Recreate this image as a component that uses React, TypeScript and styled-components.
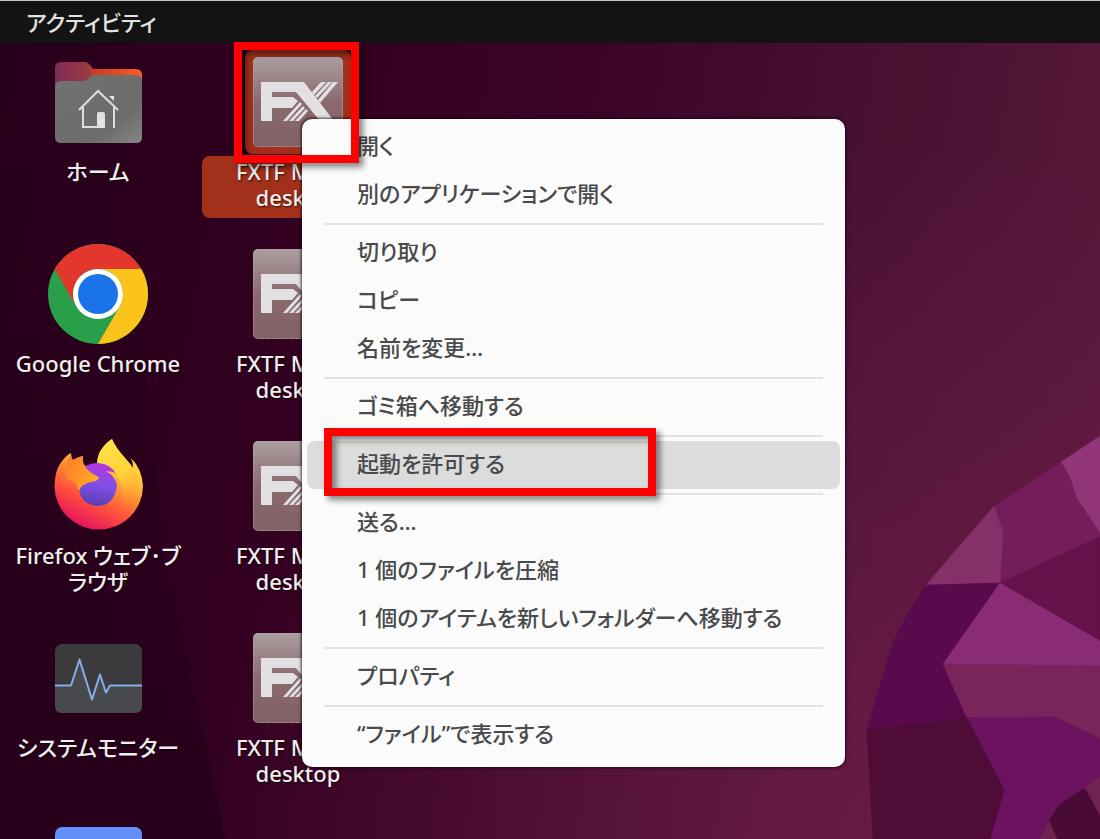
import React from "react";
import styled, { createGlobalStyle } from "styled-components";

const GlobalStyle = createGlobalStyle`
  * { box-sizing: border-box; }
  body {
    margin: 0;
    background: #2b001e;
    font-family: "Noto Sans", "Noto Sans CJK JP", sans-serif;
    font-weight: 500;
    font-feature-settings: "palt";
  }
  button { font: inherit; font-feature-settings: inherit; color: inherit; border: 0; background: none; padding: 0; }
`;

const Screen = styled.div`
  position: relative;
  display: flex;
  flex-direction: column;
  height: 100vh;
  overflow: hidden;
`;

const TopBar = styled.header`
  flex: none;
  display: flex;
  align-items: center;
  height: 43px;
  padding: 0 26px;
  background: #131313;
  border-top: 1px solid #c4c8c8;
`;

const Activities = styled.button`
  color: #e2e2e2;
  font-size: 22px;
  line-height: 26px;
`;

const Desktop = styled.main`
  flex: 1;
  min-height: 0;
  position: relative;
  display: flex;
  gap: 8px;
  padding: 9px 2px 0;
  background:
    radial-gradient(circle at 82% 100%, rgba(112, 30, 76, 0.75), rgba(112, 30, 76, 0) 58%),
    linear-gradient(100deg, #29001b 0%, #30001f 22%, #3b0427 48%, #481030 70%, #5b1a3c 100%);
`;

const Wallpaper = styled.svg`
  position: absolute;
  inset: 0;
  width: 100%;
  height: 100%;
`;

const Column = styled.div`
  position: relative;
  flex: none;
  display: grid;
  grid-template-columns: 192px;
  grid-auto-rows: 184px;
  align-content: start;
  gap: 8px;
`;

const Launcher = styled.button`
  display: flex;
  flex-direction: column;
  align-items: center;
  gap: 4px;
`;

const IconBox = styled.span<{ $selected?: boolean }>`
  display: block;
  width: 106px;
  height: 104px;
  margin: -2px 0;
  padding: 2px 3px;
  border-radius: 8px;
  background: ${(p) => (p.$selected ? "#a2301b" : "transparent")};
  svg { display: block; }
`;

const LauncherLabel = styled.span<{ $selected?: boolean }>`
  align-self: stretch;
  padding: 2px 8px 8px;
  border-radius: 8px;
  background: ${(p) => (p.$selected ? "#a2301b" : "transparent")};
  color: #f0eeee;
  font-size: 22px;
  line-height: 26px;
  white-space: pre-line;
  text-shadow: 1px 1px 2px rgba(0, 0, 0, 0.7);
`;

const Menu = styled.div`
  position: absolute;
  left: 302px;
  top: 119px;
  width: 543px;
  padding: 4px 5px 8px;
  border-radius: 10px;
  background: #fafbfa;
  box-shadow: 0 0 3px 1px rgba(20, 0, 14, 0.75);
`;

const MenuItem = styled.button<{ $active?: boolean }>`
  display: block;
  width: 100%;
  height: 48px;
  padding: 0 50px 4px;
  border-radius: 8px;
  text-align: left;
  white-space: nowrap;
  font-size: 22px;
  line-height: 44px;
  color: #4a4a4c;
  background: ${(p) => (p.$active ? "#dcdcdc" : "transparent")};
`;

const Separator = styled.hr`
  height: 2px;
  margin: 4px 17px;
  border: 0;
  background: #e2e2e2;
`;

const Marker = styled.div<{ $x: number; $y: number; $w: number; $h: number }>`
  position: absolute;
  left: ${(p) => p.$x}px;
  top: ${(p) => p.$y}px;
  width: ${(p) => p.$w}px;
  height: ${(p) => p.$h}px;
  border: 8px solid #fe0000;
  filter: drop-shadow(4px 4px 3px rgba(0, 0, 0, 0.5));
  pointer-events: none;
`;

const facets: [string, string][] = [
  ["#903578", "1100,436 1061,462 1070,478 1077,499 1100,533"],
  ["#751d5a", "1061,462 994,506 1003,532 1000,583 1100,537 1100,533 1077,499 1070,478"],
  ["#86306a", "994,506 1003,532 1000,583 926,585"],
  ["#63124a", "1000,583 1100,537 1100,641"],
  ["#590a4c", "926,585 1000,583 943,664 967,718 867,730 880,684 894,640 910,610"],
  ["#892c75", "1000,583 1100,641 1100,666 943,664"],
  ["#7a245c", "943,664 1100,666 1100,739 1055,717 967,718"],
  ["#6d125f", "967,718 1055,717 1100,739 1100,776 1059,805 1040,839 990,839 1004,790"],
  ["#4e0c36", "867,730 967,718 1004,790 990,839 873,839"],
  ["#4a0a36", "1059,805 1085,788 1100,815 1100,839 1057,839 1049,821"],
  ["#702350", "1085,788 1100,776 1100,815"],
  ["#702350", "1049,821 1057,839 1040,839"],
];

const HomeIcon = () => (
  <svg width="100" height="100" viewBox="0 0 100 100" aria-hidden="true">
    <defs>
      <linearGradient id="tab" x1="0" x2="1" y1="0" y2="0">
        <stop offset="0" stopColor="#7f2a57" />
        <stop offset="0.4" stopColor="#9c3a40" />
        <stop offset="0.42" stopColor="#c23c2b" />
        <stop offset="1" stopColor="#ff5a28" />
      </linearGradient>
      <linearGradient id="folder" x1="0" x2="1" y1="0" y2="1">
        <stop offset="0" stopColor="#707270" />
        <stop offset="0.7" stopColor="#6c6d6b" />
        <stop offset="1" stopColor="#858785" />
      </linearGradient>
    </defs>
    <path d="M7 16q0-6 6-6h24q3 0 5 3l3 4h43q6 0 6 6v20H7z" fill="url(#tab)" />
    <path d="M7 35q0-6 6-6h22q3 0 5-2l2-2q2-2 5-2h41q6 0 6 6v56q0 6-6 6H13q-6 0-6-6z" fill="url(#folder)" />
    <g fill="none" stroke="#dcdcdc" strokeWidth="2">
      <path d="M31 58l19-19 20 19" />
      <path d="M35 55v20h21M66 55v21" />
    </g>
    <path d="M49 62q0-2 2-2h4q2 0 2 2v14h-8zM61 44h5v5z" fill="#e2e2e2" />
  </svg>
);

const ChromeIcon = () => (
  <svg width="100" height="100" viewBox="0 0 100 100" aria-hidden="true">
    <circle cx="50" cy="50" r="50" fill="#2a9f49" />
    <path d="M50 25H93.3A50 50 0 0 1 50 100L71.7 62.5A25 25 0 0 0 50 25z" fill="#fcc31a" />
    <path d="M6.7 25A50 50 0 0 1 93.3 25H50A25 25 0 0 0 28.3 62.5z" fill="#e3372d" />
    <circle cx="50" cy="50" r="25" fill="#fff" />
    <circle cx="50" cy="50" r="20" fill="#1a73e8" />
  </svg>
);

const FirefoxIcon = () => (
  <svg width="100" height="100" viewBox="0 0 100 100" aria-hidden="true">
    <defs>
      <linearGradient id="body" x1="0.8" y1="0.1" x2="0.35" y2="1">
        <stop offset="0.05" stopColor="#ffe03e" />
        <stop offset="0.3" stopColor="#ffbd38" />
        <stop offset="0.5" stopColor="#ff8430" />
        <stop offset="0.72" stopColor="#ff4a3f" />
        <stop offset="1" stopColor="#e31261" />
      </linearGradient>
      <linearGradient id="globe" x1="0.6" y1="0" x2="0.4" y2="1">
        <stop offset="0" stopColor="#b833e1" />
        <stop offset="0.5" stopColor="#7f4fe8" />
        <stop offset="1" stopColor="#5a3fb0" />
      </linearGradient>
      <linearGradient id="head" x1="0" y1="0.2" x2="1" y2="0.7">
        <stop offset="0" stopColor="#ff7b2e" />
        <stop offset="1" stopColor="#ffb01e" />
      </linearGradient>
      <linearGradient id="flame" x1="0" y1="0" x2="0.5" y2="1">
        <stop offset="0" stopColor="#ffe34a" />
        <stop offset="0.6" stopColor="#ffd53a" />
        <stop offset="1" stopColor="#ffa436" stopOpacity="0" />
      </linearGradient>
    </defs>
    <path d="M23 17Q23 22 25 24Q30 21 35 20Q34 26 37 30L49 29Q49 13 64 3Q67 11 77 22Q82 28 85 32Q85 26 83 22Q94 33 95 50A44 44 0 0 1 50.500 93.500A44 44 0 0 1 6.500 50Q7 35 12 28Q17 20 23 17z" fill="url(#body)" />
    <path d="M49 29Q49 13 64 3Q67 11 77 22Q93 38 90 56Q84 72 74 76Q80 46 62 32Q56 28 49 29z" fill="url(#flame)" />
    <path d="M36 31Q42 27 50 27Q63 28 68 38Q70 46 68 55Q63 70 50 70Q33 69 31 53L33 44z" fill="url(#globe)" />
    <path d="M58 35.500Q64 34.500 69 38L69 48Q66 39 58 35.500z" fill="#ffb93a" />
    <path d="M23 18Q23 22 25 24Q30 21 35 20Q33 25 36 29Q41 37 51 41Q51 45 43 46Q33 48 31 55Q28 44 19 43Q14 35 23 18z" fill="url(#head)" />
  </svg>
);

const MonitorIcon = () => (
  <svg width="100" height="100" viewBox="0 0 100 100" aria-hidden="true">
    <rect x="7" y="16" width="87" height="69" rx="7" fill="#3b3b3d" />
    <path d="M7 57h16l8-25 13 40 7-24 7 17 3-8h33v21q0 7-7 7H14q-7 0-7-7z" fill="#48494c" />
    <path d="M7 57.500h16l8.500-26 12.500 40 8-25 6 18 4-7h32" fill="none" stroke="#86aeea" strokeWidth="2" strokeLinejoin="round" />
  </svg>
);

const BlueIcon = () => (
  <svg width="100" height="100" viewBox="0 0 100 100" aria-hidden="true">
    <rect x="7" y="7" width="87" height="87" rx="7" fill="#638ff8" />
  </svg>
);

const FxIcon = ({ id }: { id: string }) => (
  <svg width="100" height="100" viewBox="0 0 100 100" aria-hidden="true">
    <defs>
      <linearGradient id={`${id}-bg`} x1="0" y1="0" x2="0" y2="1">
        <stop offset="0" stopColor="#a89a9c" />
        <stop offset="0.5" stopColor="#805e62" />
        <stop offset="1" stopColor="#765459" />
      </linearGradient>
      <pattern id={`${id}-dots`} width="2" height="2" patternUnits="userSpaceOnUse">
        <rect width="1" height="1" fill="#c8bcbc" fillOpacity="0.25" />
        <rect x="1" y="1" width="1" height="1" fill="#c8bcbc" fillOpacity="0.25" />
      </pattern>
    </defs>
    <rect x="5" y="5" width="90" height="90" rx="5" fill={`url(#${id}-bg)`} />
    <rect x="5" y="5" width="90" height="90" rx="5" fill={`url(#${id}-dots)`} />
    <rect x="5.500" y="5.500" width="89" height="89" rx="5" fill="none" stroke="#b9a6a6" strokeOpacity="0.7" strokeDasharray="2 1" />
    <g fill="#e2e0e0">
      <path d="M13 30h43l30 39H72L48 40H24v5h21l5 4-6 7H24v13H13z" />
      <path d="M35 69l17-19 2 2-15 17zM41 69l14-15 2 2-12 13zM47 69l11-12 2 2-9 10z" />
      <path d="M64 40l9-10h5L66 43zM67 44l13-14h4L69 46zM70 48l15-18h5L72 51z" />
    </g>
  </svg>
);

const apps: { name: string; text?: string; icon: React.ReactNode }[] = [
  { name: "ホーム", text: "ホーム", icon: <HomeIcon /> },
  { name: "Google Chrome", text: "Google Chrome", icon: <ChromeIcon /> },
  { name: "Firefox", text: "Firefox ウェブ･ブ\nラウザ", icon: <FirefoxIcon /> },
  { name: "システムモニター", text: "システムモニター", icon: <MonitorIcon /> },
  { name: "フォルダー", icon: <BlueIcon /> },
];

const shortcuts = ["fx1", "fx2", "fx3", "fx4"];

const menuGroups = [
  ["開く", "別のアプリケーションで開く"],
  ["切り取り", "コピー", "名前を変更…"],
  ["ゴミ箱へ移動する"],
  ["起動を許可する"],
  ["送る…", "1 個のファイルを圧縮", "1 個のアイテムを新しいフォルダーへ移動する"],
  ["プロパティ"],
  ["“ファイル”で表示する"],
];

export default function App() {
  return (
    <>
      <GlobalStyle />
      <Screen>
        <TopBar>
          <Activities type="button">アクティビティ</Activities>
        </TopBar>
        <Desktop>
          <Wallpaper viewBox="0 43 1100 796" preserveAspectRatio="xMaxYMax slice" aria-hidden="true">
            <defs>
              <linearGradient id="shade" x1="0" y1="0" x2="0" y2="1">
                <stop offset="0" stopColor="#26001a" stopOpacity="0" />
                <stop offset="1" stopColor="#26001a" stopOpacity="0.8" />
              </linearGradient>
            </defs>
            <polygon points="0,43 130,43 150,420 165,560 188,660 225,839 0,839" fill="url(#shade)" />
            {facets.map(([fill, points]) => (
              <polygon key={points} points={points} fill={fill} stroke={fill} strokeWidth="0.5" />
            ))}
          </Wallpaper>
          <Column>
            {apps.map((app) => (
              <Launcher key={app.name} type="button" aria-label={app.text ? undefined : app.name}>
                <IconBox>{app.icon}</IconBox>
                {app.text && <LauncherLabel>{app.text}</LauncherLabel>}
              </Launcher>
            ))}
          </Column>
          <Column>
            {shortcuts.map((id, i) => (
              <Launcher key={id} type="button">
                <IconBox $selected={i === 0}>
                  <FxIcon id={id} />
                </IconBox>
                <LauncherLabel $selected={i === 0}>{"FXTF MT4 1.\ndesktop"}</LauncherLabel>
              </Launcher>
            ))}
          </Column>
        </Desktop>
        <Menu role="menu">
          {menuGroups.map((group, g) => (
            <React.Fragment key={group[0]}>
              {g > 0 && <Separator />}
              {group.map((item) => (
                <MenuItem key={item} type="button" role="menuitem" $active={item === "起動を許可する"}>
                  {item}
                </MenuItem>
              ))}
            </React.Fragment>
          ))}
        </Menu>
        <Marker $x={234} $y={42} $w={125} $h={121} />
        <Marker $x={324} $y={428} $w={332} $h={68} />
      </Screen>
    </>
  );
}
